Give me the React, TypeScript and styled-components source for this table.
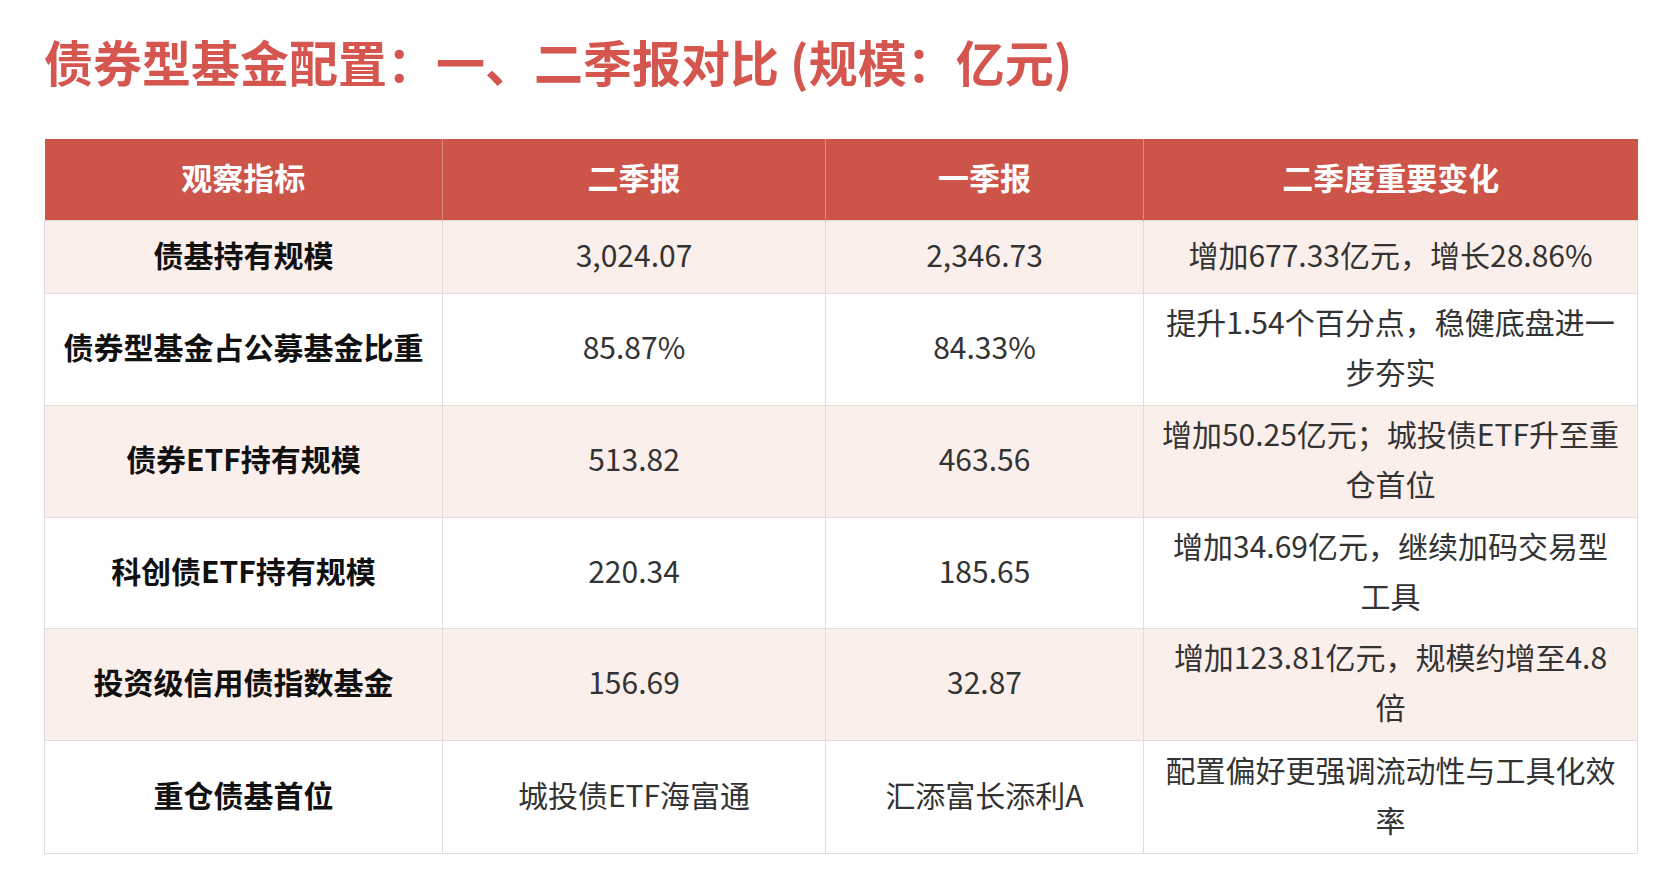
import React from "react";
import styled, { createGlobalStyle } from "styled-components";

const Global = createGlobalStyle`
  html, body { margin: 0; padding: 0; background: #ffffff; }
  body { font-family: "Noto Sans CJK SC", "Noto Sans", sans-serif; }
`;

const Page = styled.div`
  width: 1678px;
  height: 888px;
  padding: 0 0 0 44px;
  box-sizing: border-box;
  background: #fff;
`;

const Title = styled.h1`
  margin: 0;
  height: 139px;
  display: flex;
  align-items: center;
  padding-bottom: 18px;
  box-sizing: border-box;
  font-family: "Noto Sans CJK SC", sans-serif;
  font-weight: 700;
  font-size: 49px;
  color: #d4564f;
`;

const Table = styled.table`
  border-collapse: collapse;
  width: 1593px;
  table-layout: fixed;
  font-family: "Noto Sans CJK SC", sans-serif;
`;

const HeadRow = styled.tr`
  height: 81px;
  background: #cc5449;
`;

const HeadCell = styled.th`
  color: #ffffff;
  font-weight: 700;
  font-size: 31px;
  text-align: center;
  padding: 0 0 6px 0;
  border-left: 1px solid #e08a82;
  &:first-child { border-left: none; }
`;

const Row = styled.tr<{ $tint: boolean; $h: number }>`
  height: ${(p) => p.$h}px;
  background: ${(p) => (p.$tint ? "#fbefeb" : "#ffffff")};
`;

const Cell = styled.td<{ $bold?: boolean; $pad?: number }>`
  border: 1px solid #e2dcdb;
  text-align: center;
  vertical-align: middle;
  padding: 0 ${(p) => p.$pad ?? 10}px 6px;
  font-size: 30px;
  line-height: 50px;
  font-weight: ${(p) => (p.$bold ? 700 : 400)};
  color: ${(p) => (p.$bold ? "#111111" : "#333333")};
`;

const cols = [398, 383, 318, 494];

const rows = [
  { name: "债基持有规模", q2: "3,024.07", q1: "2,346.73", change: "增加677.33亿元，增长28.86%", h: 73 },
  { name: "债券型基金占公募基金比重", q2: "85.87%", q1: "84.33%", change: "提升1.54个百分点，稳健底盘进一步夯实", h: 112 },
  { name: "债券ETF持有规模", q2: "513.82", q1: "463.56", change: "增加50.25亿元；城投债ETF升至重仓首位", h: 112 },
  { name: "科创债ETF持有规模", q2: "220.34", q1: "185.65", change: "增加34.69亿元，继续加码交易型工具", h: 111 },
  { name: "投资级信用债指数基金", q2: "156.69", q1: "32.87", change: "增加123.81亿元，规模约增至4.8倍", h: 112 },
  { name: "重仓债基首位", q2: "城投债ETF海富通", q1: "汇添富长添利A", change: "配置偏好更强调流动性与工具化效率", h: 113 },
];

export default function App() {
  return (
    <Page>
      <Global />
      <Title>债券型基金配置：一、二季报对比 (规模：亿元)</Title>
      <Table>
        <colgroup>
          {cols.map((w, i) => (
            <col key={i} style={{ width: w }} />
          ))}
        </colgroup>
        <thead>
          <HeadRow>
            <HeadCell>观察指标</HeadCell>
            <HeadCell>二季报</HeadCell>
            <HeadCell>一季报</HeadCell>
            <HeadCell>二季度重要变化</HeadCell>
          </HeadRow>
        </thead>
        <tbody>
          {rows.map((r, i) => (
            <Row key={i} $tint={i % 2 === 0} $h={r.h}>
              <Cell $bold>{r.name}</Cell>
              <Cell>{r.q2}</Cell>
              <Cell>{r.q1}</Cell>
              <Cell $pad={17}>{r.change}</Cell>
            </Row>
          ))}
        </tbody>
      </Table>
    </Page>
  );
}
